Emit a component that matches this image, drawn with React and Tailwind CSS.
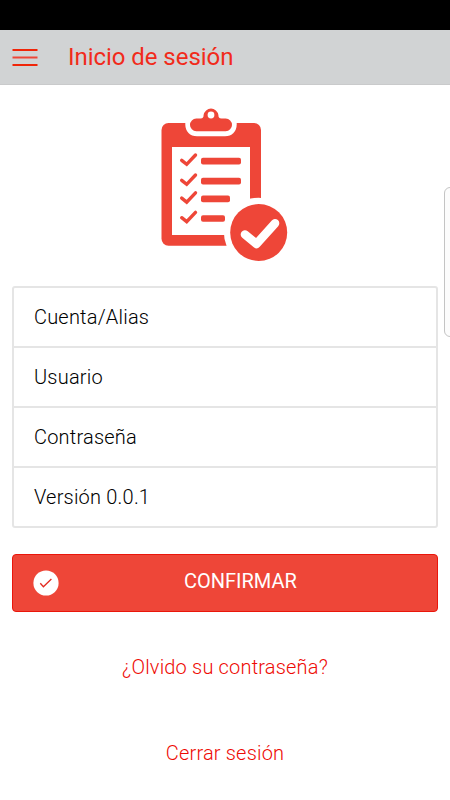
import React from "react";

const fields = ["Cuenta/Alias", "Usuario", "Contraseña", "Versión 0.0.1"];

const tasks = [
  { y: 161, end: 241 },
  { y: 181, end: 241 },
  { y: 198.8, end: 230 },
  { y: 218.4, end: 225 },
];

const ClipboardLogo = () => (
  <svg width="130" height="158" viewBox="160 106 130 158" fill="none">
    <rect x="161.5" y="123" width="99.5" height="122.7" rx="7" fill="#ee4638" />
    <path d="M172 147H250V235H172Z" fill="#fff" />
    <path
      d="M185.3 120V124.5C185.3 131.5 190 136.3 197 136.3H225C232 136.3 236.7 131.5 236.7 124.5V120Z"
      fill="#fff"
    />
    <path
      d="M196.3 118.6H200.5C203 118.6 203.6 117 203.6 115A7.5 7.7 0 0 1 218.4 115C218.4 117 219 118.6 221.5 118.6H225.7A6.2 6.2 0 0 1 225.7 131.2H196.3A6.2 6.2 0 0 1 196.3 118.6Z"
      fill="#ee4638"
    />
    <circle cx="211" cy="115" r="3.4" fill="#fff" />
    {tasks.map(({ y, end }) => (
      <g key={y}>
        <path
          d="M181.7 160.3L186.7 164.3L195.5 155"
          transform={`translate(0 ${y - 161})`}
          stroke="#ee4638"
          strokeWidth="3.4"
          strokeLinecap="round"
        />
        <rect x="201" y={y - 3.2} width={end - 201} height="6.6" rx="2" fill="#ee4638" />
      </g>
    ))}
    <circle cx="258.7" cy="232.5" r="34.8" fill="#fff" />
    <circle cx="258.7" cy="232.5" r="28.5" fill="#ee4638" />
    <path
      d="M245 234.5L256.5 244L275 223.3"
      stroke="#fff"
      strokeWidth="8.6"
      strokeLinecap="round"
      strokeLinejoin="round"
    />
  </svg>
);

const App = () => {
  return (
    <div className="relative h-[800px] w-[450px] overflow-hidden bg-white font-['Roboto',sans-serif]">
      <div className="h-[30px] bg-black" />

      <header className="flex h-[55px] items-center border-b border-[#c9cacb] bg-[#d1d3d4] pl-[12px]">
        <svg width="26" height="20" viewBox="0 0 26 20" className="mt-px">
          <path d="M.5 2H25.5M.5 17H25.5" stroke="#f02508" strokeWidth="2" />
          <path d="M.5 9.5H25.5" stroke="#ee4638" strokeWidth="2" />
        </svg>
        <h1 className="ml-[30px] text-[24px] leading-[28px] tracking-[-0.05px] text-[#f12b1b]">
          Inicio de sesión
        </h1>
      </header>

      <main className="flex flex-col px-[12px]">
        <div className="flex pl-[148px] pt-[21px]">
          <ClipboardLogo />
        </div>

        <div className="mt-[22px] w-[426px] divide-y-2 divide-[#e5e5e5] rounded-[3px] border-2 border-[#e5e5e5]">
          {fields.map((label) => (
            <div
              key={label}
              className="flex h-[60px] items-center pl-[20px] text-[20px] font-[350] tracking-[0.2px] text-black last:h-[58px]"
            >
              {label}
            </div>
          ))}
        </div>

        <button className="mt-[26px] flex h-[58px] w-[426px] items-center rounded-[4px] border border-[#ea160b] bg-[#ee4638] pl-[20px] text-white">
          <svg width="26" height="26" viewBox="0 0 26 26" fill="none" className="mb-[1px]">
            <circle cx="13" cy="13" r="12.6" fill="#fff" />
            <path d="M7.3 13.3L10.4 16.8L18.4 9" stroke="#e32a20" strokeWidth="1.3" />
          </svg>
          <span className="mb-[4px] ml-[125px] text-[20px] leading-[24px]">CONFIRMAR</span>
        </button>

        <a className="mt-[43px] text-center text-[20px] font-[350] leading-[24px] tracking-[0.18px] text-[#ee0a04]">
          ¿Olvido su contraseña?
        </a>
        <a className="mt-[62px] text-center text-[20px] font-[350] leading-[24px] tracking-[0.18px] text-[#ee0a04]">
          Cerrar sesión
        </a>
      </main>

      {/* edge panel handle */}
      <div className="absolute -right-[6px] top-[187px] h-[150px] w-[12px] rounded-[6px] border border-[#c4c4c4] bg-[#fcfcfc]" />
    </div>
  );
};

export default App;
